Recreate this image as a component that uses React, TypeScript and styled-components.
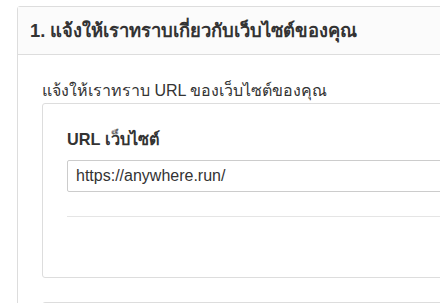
import React from 'react';
import styled, { createGlobalStyle } from 'styled-components';

const GlobalStyle = createGlobalStyle`
  html, body {
    margin: 0;
    padding: 0;
    background: #ffffff;
    overflow: hidden;
  }
  body {
    font-family: "Liberation Sans", Arial, "Noto Sans", sans-serif;
    color: #333333;
  }
`;

const Page = styled.div`
  width: 440px;
  height: 303px;
  overflow: hidden;
  padding: 6px 0 0 17px;
  box-sizing: border-box;
`;

const Panel = styled.section`
  width: 700px;
  border: 1px solid #dddddd;
  border-radius: 3px;
  background: #ffffff;
`;

const PanelHeading = styled.h3`
  display: flex;
  align-items: center;
  height: 47px;
  margin: 0;
  padding: 0 12px;
  background: #fbfbfb;
  border-bottom: 1px solid #dddddd;
  font-size: 18.4px;
  font-weight: bold;
  color: #333333;
`;

const PanelBody = styled.div`
  padding: 0 0 0 24px;
`;

const Lead = styled.p`
  margin: 25px 0 1px;
  line-height: 22px;
  font-size: 16px;
  color: #333333;
`;

const Card = styled.div<{ $height?: number }>`
  border: 1px solid #dddddd;
  border-radius: 3px;
  padding: 0 24px;
  margin-bottom: 24px;
  ${({ $height }) => ($height ? `height: ${$height}px;` : '')}
`;

const FieldLabel = styled.label`
  display: block;
  margin-top: 24px;
  line-height: 22px;
  font-size: 16.3px;
  font-weight: bold;
  color: #333333;
`;

const TextInput = styled.input`
  display: block;
  box-sizing: border-box;
  width: 100%;
  height: 32px;
  margin-top: 10px;
  padding: 0 8px;
  border: 1px solid #cccccc;
  border-radius: 2px;
  font-family: "Liberation Sans", Arial, sans-serif;
  font-size: 16px;
  color: #333333;
  outline: none;
`;

const Divider = styled.hr`
  margin: 24px 0 60px;
  border: 0;
  border-top: 1px solid #e5e5e5;
`;

export default function App() {
  return (
    <>
      <GlobalStyle />
      <Page>
        <Panel>
          <PanelHeading>1. แจ้งให้เราทราบเกี่ยวกับเว็บไซต์ของคุณ</PanelHeading>
          <PanelBody>
            <Lead>แจ้งให้เราทราบ URL ของเว็บไซต์ของคุณ</Lead>
            <Card>
              <FieldLabel htmlFor="site-url">URL เว็บไซต์</FieldLabel>
              <TextInput id="site-url" defaultValue="https://anywhere.run/" />
              <Divider />
            </Card>
            <Card $height={60} />
          </PanelBody>
        </Panel>
      </Page>
    </>
  );
}
